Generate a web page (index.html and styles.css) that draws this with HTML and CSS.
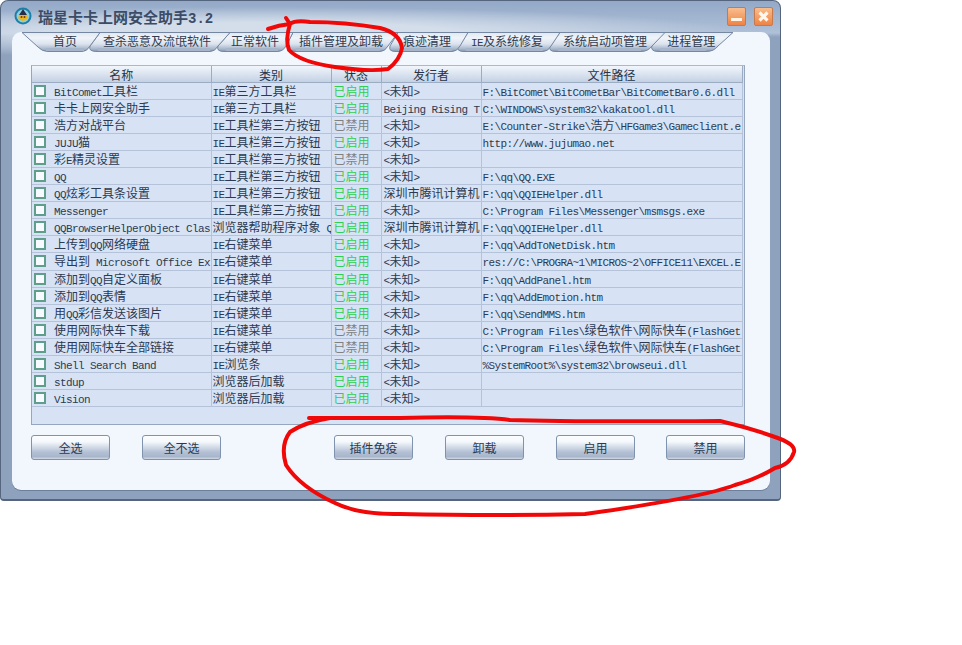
FILE: index.html
```html
<!DOCTYPE html>
<html lang="zh-CN">

<head>
  <meta charset="UTF-8" />
  <title>瑞星卡卡上网安全助手3.2</title>
  <link rel="stylesheet" href="styles.css">
</head>

<body>
  <div class="window">
    <div class="titlebar">
      <svg class="logo" viewBox="0 0 18 18" width="18" height="18">
        <circle cx="9" cy="9" r="8.5" fill="#1d7fa8" />
        <circle cx="9" cy="9" r="6.5" fill="#8fd0e0" />
        <path d="M4 11 Q9 17 14 11 L13 8 H5 Z" fill="#e8b820" />
        <path d="M5 8 L9 2 L13 8 Z" fill="#2a2f48" />
        <circle cx="7.5" cy="10" r="1" fill="#7a3010" />
        <circle cx="10.5" cy="10" r="1" fill="#7a3010" />
      </svg>
      <div class="title">瑞星卡卡上网安全助手<span class="ver">3.2</span></div>
      <div class="winbtn"><span class="minus"></span></div>
      <div class="winbtn">
        <svg viewBox="0 0 19 19" width="19" height="19">
          <path d="M5.5 5.5 L13.5 13.5 M13.5 5.5 L5.5 13.5" stroke="#fff6ee" stroke-width="3.2" />
        </svg>
      </div>
    </div>

    <div class="panel">
      <div class="tabs">
        <svg class="tabshape" viewBox="12 32 758 22" width="758" height="22">
          <defs>
            <linearGradient id="tabfill" gradientUnits="userSpaceOnUse" x1="0" y1="32" x2="0" y2="52">
              <stop offset="0" stop-color="#dfe7f1" />
              <stop offset="0.3" stop-color="#f0f4fa" />
              <stop offset="0.6" stop-color="#dbe3ee" />
              <stop offset="0.85" stop-color="#a7b6cb" />
              <stop offset="1" stop-color="#7e90ab" />
            </linearGradient>
          </defs>
          <g fill="url(#tabfill)" stroke="#7486a0">
            <path d="M660 32.5 L652 45 Q650 51.5 658 51.5 H706 Q714 51.5 718 46 L733 32.5 Z" />
            <path d="M560 32.5 L550 46 Q548 51.5 556 51.5 H641 Q648 51.5 652 46 L665 32.5 Z" />
            <path d="M468 32.5 L458 46 Q456 51.5 464 51.5 H543 Q548 51.5 551 46 L560 32.5 Z" />
            <path d="M398 32.5 L390 46 Q388 51.5 396 51.5 H452 Q457 51.5 460 46 L468 32.5 Z" />
            <path d="M293 32.5 L287 44 Q287 51.5 295 51.5 H380 Q385 51.5 388 46 L398 32.5 Z" />
            <path d="M230 32.5 L218 46 Q216 51.5 224 51.5 H277 Q283 51.5 286 46 L293 32.5 Z" />
            <path d="M100 32.5 L90 46 Q88 51.5 97 51.5 H210 Q215 51.5 218 46 L230 32.5 Z" />
            <path d="M22 32.5 L38 47 Q42 51.5 48 51.5 H82 Q87 51.5 90 46 L100 32.5 Z" />
          </g>
          <path class="tabshade" d="M46 49.5 H84 M98 49.5 H210 M226 49.5 H278 M296 49.5 H380 M398 49.5 H452 M466 49.5 H543 M558 49.5 H641 M660 49.5 H706" />
        </svg>
        <div class="tab tab-first">首页</div>
        <div class="tab">查杀恶意及流氓软件</div>
        <div class="tab">正常软件</div>
        <div class="tab">插件管理及卸载</div>
        <div class="tab">痕迹清理</div>
        <div class="tab"><span class="en">IE</span>及系统修复</div>
        <div class="tab">系统启动项管理</div>
        <div class="tab">进程管理</div>
      </div>

      <div class="list">
        <table>
          <colgroup>
            <col class="c-name">
            <col class="c-type">
            <col class="c-state">
            <col class="c-pub">
            <col class="c-path">
          </colgroup>
          <thead>
            <tr><th>名称</th><th>类别</th><th>状态</th><th>发行者</th><th>文件路径</th></tr>
          </thead>
          <tbody>
            <tr>
              <td><div class="name"><i class="check"></i><span class="en">BitComet</span>工具栏</div></td>
              <td><div class="cell"><span class="en">IE</span>第三方工具栏</div></td>
              <td><div class="cell on">已启用</div></td>
              <td><div class="cell"><span class="en">&lt;</span>未知<span class="en">&gt;</span></div></td>
              <td><div class="cell"><span class="en">F:\BitComet\BitCometBar\BitCometBar0.6.dll</span></div></td>
            </tr>
            <tr>
              <td><div class="name"><i class="check"></i>卡卡上网安全助手</div></td>
              <td><div class="cell"><span class="en">IE</span>第三方工具栏</div></td>
              <td><div class="cell on">已启用</div></td>
              <td><div class="cell"><span class="en">Beijing Rising T</span></div></td>
              <td><div class="cell"><span class="en">C:\WINDOWS\system32\kakatool.dll</span></div></td>
            </tr>
            <tr>
              <td><div class="name"><i class="check"></i>浩方对战平台</div></td>
              <td><div class="cell"><span class="en">IE</span>工具栏第三方按钮</div></td>
              <td><div class="cell off">已禁用</div></td>
              <td><div class="cell"><span class="en">&lt;</span>未知<span class="en">&gt;</span></div></td>
              <td><div class="cell"><span class="en">E:\Counter-Strike\</span>浩方<span class="en">\HFGame3\Gameclient.e</span></div></td>
            </tr>
            <tr>
              <td><div class="name"><i class="check"></i><span class="en">JUJU</span>猫</div></td>
              <td><div class="cell"><span class="en">IE</span>工具栏第三方按钮</div></td>
              <td><div class="cell on">已启用</div></td>
              <td><div class="cell"><span class="en">&lt;</span>未知<span class="en">&gt;</span></div></td>
              <td><div class="cell"><span class="en">http://www.jujumao.net</span></div></td>
            </tr>
            <tr>
              <td><div class="name"><i class="check"></i>彩<span class="en">E</span>精灵设置</div></td>
              <td><div class="cell"><span class="en">IE</span>工具栏第三方按钮</div></td>
              <td><div class="cell off">已禁用</div></td>
              <td><div class="cell"><span class="en">&lt;</span>未知<span class="en">&gt;</span></div></td>
              <td><div class="cell"></div></td>
            </tr>
            <tr>
              <td><div class="name"><i class="check"></i><span class="en">QQ</span></div></td>
              <td><div class="cell"><span class="en">IE</span>工具栏第三方按钮</div></td>
              <td><div class="cell on">已启用</div></td>
              <td><div class="cell"><span class="en">&lt;</span>未知<span class="en">&gt;</span></div></td>
              <td><div class="cell"><span class="en">F:\qq\QQ.EXE</span></div></td>
            </tr>
            <tr>
              <td><div class="name"><i class="check"></i><span class="en">QQ</span>炫彩工具条设置</div></td>
              <td><div class="cell"><span class="en">IE</span>工具栏第三方按钮</div></td>
              <td><div class="cell on">已启用</div></td>
              <td><div class="cell">深圳市腾讯计算机</div></td>
              <td><div class="cell"><span class="en">F:\qq\QQIEHelper.dll</span></div></td>
            </tr>
            <tr>
              <td><div class="name"><i class="check"></i><span class="en">Messenger</span></div></td>
              <td><div class="cell"><span class="en">IE</span>工具栏第三方按钮</div></td>
              <td><div class="cell on">已启用</div></td>
              <td><div class="cell"><span class="en">&lt;</span>未知<span class="en">&gt;</span></div></td>
              <td><div class="cell"><span class="en">C:\Program Files\Messenger\msmsgs.exe</span></div></td>
            </tr>
            <tr>
              <td><div class="name"><i class="check"></i><span class="en">QQBrowserHelperObject Clas</span></div></td>
              <td><div class="cell">浏览器帮助程序对象<span class="en"> Q</span></div></td>
              <td><div class="cell on">已启用</div></td>
              <td><div class="cell">深圳市腾讯计算机</div></td>
              <td><div class="cell"><span class="en">F:\qq\QQIEHelper.dll</span></div></td>
            </tr>
            <tr>
              <td><div class="name"><i class="check"></i>上传到<span class="en">QQ</span>网络硬盘</div></td>
              <td><div class="cell"><span class="en">IE</span>右键菜单</div></td>
              <td><div class="cell on">已启用</div></td>
              <td><div class="cell"><span class="en">&lt;</span>未知<span class="en">&gt;</span></div></td>
              <td><div class="cell"><span class="en">F:\qq\AddToNetDisk.htm</span></div></td>
            </tr>
            <tr>
              <td><div class="name"><i class="check"></i>导出到<span class="en"> Microsoft Office Ex</span></div></td>
              <td><div class="cell"><span class="en">IE</span>右键菜单</div></td>
              <td><div class="cell on">已启用</div></td>
              <td><div class="cell"><span class="en">&lt;</span>未知<span class="en">&gt;</span></div></td>
              <td><div class="cell"><span class="en">res://C:\PROGRA~1\MICROS~2\OFFICE11\EXCEL.E</span></div></td>
            </tr>
            <tr>
              <td><div class="name"><i class="check"></i>添加到<span class="en">QQ</span>自定义面板</div></td>
              <td><div class="cell"><span class="en">IE</span>右键菜单</div></td>
              <td><div class="cell on">已启用</div></td>
              <td><div class="cell"><span class="en">&lt;</span>未知<span class="en">&gt;</span></div></td>
              <td><div class="cell"><span class="en">F:\qq\AddPanel.htm</span></div></td>
            </tr>
            <tr>
              <td><div class="name"><i class="check"></i>添加到<span class="en">QQ</span>表情</div></td>
              <td><div class="cell"><span class="en">IE</span>右键菜单</div></td>
              <td><div class="cell on">已启用</div></td>
              <td><div class="cell"><span class="en">&lt;</span>未知<span class="en">&gt;</span></div></td>
              <td><div class="cell"><span class="en">F:\qq\AddEmotion.htm</span></div></td>
            </tr>
            <tr>
              <td><div class="name"><i class="check"></i>用<span class="en">QQ</span>彩信发送该图片</div></td>
              <td><div class="cell"><span class="en">IE</span>右键菜单</div></td>
              <td><div class="cell on">已启用</div></td>
              <td><div class="cell"><span class="en">&lt;</span>未知<span class="en">&gt;</span></div></td>
              <td><div class="cell"><span class="en">F:\qq\SendMMS.htm</span></div></td>
            </tr>
            <tr>
              <td><div class="name"><i class="check"></i>使用网际快车下载</div></td>
              <td><div class="cell"><span class="en">IE</span>右键菜单</div></td>
              <td><div class="cell off">已禁用</div></td>
              <td><div class="cell"><span class="en">&lt;</span>未知<span class="en">&gt;</span></div></td>
              <td><div class="cell"><span class="en">C:\Program Files\</span>绿色软件<span class="en">\</span>网际快车<span class="en">(FlashGet</span></div></td>
            </tr>
            <tr>
              <td><div class="name"><i class="check"></i>使用网际快车全部链接</div></td>
              <td><div class="cell"><span class="en">IE</span>右键菜单</div></td>
              <td><div class="cell off">已禁用</div></td>
              <td><div class="cell"><span class="en">&lt;</span>未知<span class="en">&gt;</span></div></td>
              <td><div class="cell"><span class="en">C:\Program Files\</span>绿色软件<span class="en">\</span>网际快车<span class="en">(FlashGet</span></div></td>
            </tr>
            <tr>
              <td><div class="name"><i class="check"></i><span class="en">Shell Search Band</span></div></td>
              <td><div class="cell"><span class="en">IE</span>浏览条</div></td>
              <td><div class="cell on">已启用</div></td>
              <td><div class="cell"><span class="en">&lt;</span>未知<span class="en">&gt;</span></div></td>
              <td><div class="cell"><span class="en">%SystemRoot%\system32\browseui.dll</span></div></td>
            </tr>
            <tr>
              <td><div class="name"><i class="check"></i><span class="en">stdup</span></div></td>
              <td><div class="cell">浏览器后加载</div></td>
              <td><div class="cell on">已启用</div></td>
              <td><div class="cell"><span class="en">&lt;</span>未知<span class="en">&gt;</span></div></td>
              <td><div class="cell"></div></td>
            </tr>
            <tr>
              <td><div class="name"><i class="check"></i><span class="en">Vision</span></div></td>
              <td><div class="cell">浏览器后加载</div></td>
              <td><div class="cell on">已启用</div></td>
              <td><div class="cell"><span class="en">&lt;</span>未知<span class="en">&gt;</span></div></td>
              <td><div class="cell"></div></td>
            </tr>
          </tbody>
        </table>
      </div>

      <div class="actions">
        <button>全选</button>
        <button>全不选</button>
        <button class="push">插件免疫</button>
        <button>卸载</button>
        <button>启用</button>
        <button class="last">禁用</button>
      </div>
    </div>
  </div>

  <!-- red marker scribbled over the screenshot -->
  <svg class="scribble" viewBox="0 0 962 645" width="962" height="645">
    <path d="M268 29 Q279 25 290 24 L286 18 M290 24 Q285 40 289 50 Q300 62 335 67 Q370 72 388 69 Q400 60 402 48 Q400 33 380 28 Q345 22 310 22 Q295 20 290 24" />
    <path d="M309 418 H400 Q480 416 510 420 Q570 422 720 421 Q750 428 775 437 Q796 444 794 452 Q790 465 775 468 Q755 480 735 485 Q705 497 585 514 Q500 516 400 514 Q360 515 335 503 Q300 487 286 465 Q280 445 290 432 Q305 422 330 418" />
  </svg>
</body>

</html>
```
FILE: styles.css
```css
html,
body {
  margin: 0;
  background-color: white;
}

body {
  font-family: "Noto Sans CJK SC", sans-serif;
  font-size: 12px;
  color: #2b3a52;
  height: 645px;
  overflow: hidden;
}

.en {
  font-family: "Liberation Mono", monospace;
  font-size: 11px;
  letter-spacing: -0.6px;
}

.window {
  width: 781px;
  height: 501px;
  box-sizing: border-box;
  background:
    radial-gradient(ellipse 480px 26px at 260px 32px, #d4deeb 40%, rgba(212, 222, 235, 0)),
    linear-gradient(#93a9c8 0, #afc0d7 32px, #8ea2be 36px, #8ea2be 100%);
  border: 1px solid #55657d;
  border-width: 1px 1px 2px 1px;
  border-radius: 8px 8px 4px 4px;
  display: flex;
  flex-direction: column;
}

.titlebar {
  height: 31px;
  box-sizing: border-box;
  flex-shrink: 0;
  display: flex;
  align-items: center;
  padding: 0 7px 1px 13px;
}

.logo {
  margin-right: 6px;
}

.title {
  flex: 1;
  font-size: 15px;
  font-weight: 700;
  color: #3c4c66;
}

.ver {
  font-family: "Liberation Mono", monospace;
  font-size: 14px;
}

.winbtn {
  width: 19px;
  height: 19px;
  margin-left: 8px;
  border: 1px solid #c6794a;
  border-radius: 2px;
  box-sizing: border-box;
  background: linear-gradient(#f9bd8e, #ee8345);
  display: flex;
  justify-content: center;
  align-items: center;
  flex-shrink: 0;
}

.winbtn svg {
  flex-shrink: 0;
}

.minus {
  width: 11px;
  height: 3px;
  margin-top: 7px;
  background-color: #fff3e4;
}

.panel {
  width: 758px;
  height: 458px;
  margin-left: 11px;
  background-color: #f2f7fe;
  border-radius: 9px;
  box-shadow: 0 1px 0 #6c7f9b;
  overflow: hidden;
}

.tabs {
  position: relative;
  height: 20px;
  display: flex;
  gap: 20px;
  padding-left: 41px;
  align-items: flex-start;
}

.tabshape {
  position: absolute;
  left: 0;
  top: 0;
}

.tabshade {
  fill: none;
  stroke: #a6b5ca;
  stroke-width: 3;
}

.tab {
  position: relative;
  color: #2f3b50;
  line-height: 17px;
  white-space: nowrap;
}

.tab-first {
  margin-right: 6px;
}

.list {
  width: 714px;
  height: 360px;
  box-sizing: border-box;
  margin: 13px 0 0 19px;
  background-color: #d7e3f5;
  border: 1px solid #96a6bf;
  border-top-color: #a9b8cd;
}

table {
  border-collapse: collapse;
  table-layout: fixed;
  width: 710px;
}

.c-name {
  width: 179px;
}

.c-type {
  width: 120px;
}

.c-state {
  width: 50px;
}

.c-pub {
  width: 100px;
}

.c-path {
  width: 261px;
}

th {
  height: 16px;
  padding: 0;
  font-weight: 400;
  font-size: 12px;
  line-height: 15px;
  color: #26344a;
  background: linear-gradient(#f2f6fb, #c3d1e4);
  border-right: 1px solid #9cacc3;
  border-bottom: 1px solid #9cacc3;
}

td {
  height: 16.05px;
  padding: 0;
  border-right: 1px solid #b4c3d9;
  border-bottom: 1px solid #b4c3d9;
  overflow: hidden;
}

.cell,
.name {
  height: 16px;
  line-height: 16px;
  white-space: nowrap;
  overflow: hidden;
  padding-left: 1px;
  color: #2b3a52;
}

td:nth-child(3) .cell,
td:nth-child(4) .cell {
  padding-left: 2px;
}

.name {
  padding-left: 2px;
  white-space: pre;
}

.check {
  display: inline-block;
  width: 8px;
  height: 8px;
  margin-right: 8px;
  vertical-align: -1px;
  background-color: #f7fbff;
  border: 2px solid #5f9e8a;
}

.cell.on {
  color: #2ecf52;
}

.cell.off {
  color: #808080;
}

.actions {
  display: flex;
  gap: 32px;
  margin: 10px 0 0 19px;
}

.push {
  margin-left: 81px;
}

.last {
  margin-left: -1px;
}

button {
  width: 79px;
  height: 25px;
  padding: 0;
  font-family: inherit;
  font-size: 12px;
  color: #2b3a52;
  border: 1px solid #7f92ae;
  border-radius: 3px;
  background: linear-gradient(#fbfdff 0, #f5f8fc 25%, #b3c0d4 70%, #a8b6cc 90%, #d0d9e6 100%);
}

.scribble {
  position: absolute;
  left: 0;
  top: 0;
  pointer-events: none;
}

.scribble path {
  fill: none;
  stroke: #f00808;
  stroke-width: 4;
  stroke-linejoin: round;
  stroke-linecap: round;
}
```
